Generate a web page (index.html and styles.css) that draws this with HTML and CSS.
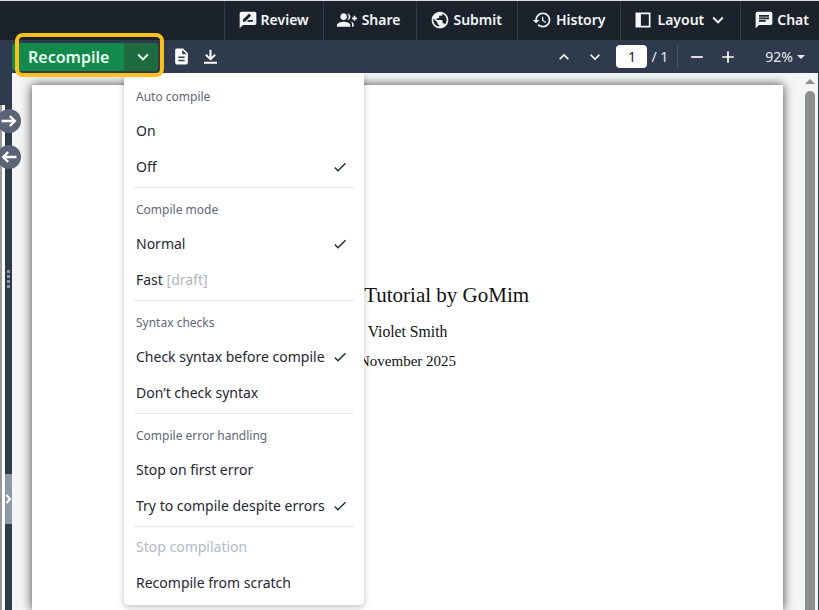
FILE: index.html
```html
<!DOCTYPE html>
<html lang="en">

<head>
    <meta charset="UTF-8">
    <meta name="viewport" content="width=device-width, initial-scale=1.0">
    <title>Recompile menu</title>
    <link rel="stylesheet" href="styles.css">
</head>

<body>
    <svg class="sprite" width="0" height="0">
        <symbol id="i-chevron" viewBox="0 0 24 24"><path d="M16.59 8.59L12 13.17 7.41 8.59 6 10l6 6 6-6z"/></symbol>
        <symbol id="i-check" viewBox="0 0 24 24"><path d="M9 16.17L4.83 12l-1.42 1.41L9 19 21 7l-1.41-1.41z"/></symbol>
    </svg>

    <header class="topbar">
        <a class="top-item top-review"><svg class="icon" viewBox="0 0 24 24"><path d="M20 2H4c-1.1 0-1.99.9-1.99 2L2 22l4-4h14c1.1 0 2-.9 2-2V4c0-1.1-.9-2-2-2zM6 14v-2.47l6.88-6.88c.2-.2.51-.2.71 0l1.77 1.77c.2.2.2.51 0 .71L8.47 14H6zm12 0h-7.5l2-2H18v2z"/></svg>Review</a>
        <a class="top-item top-share"><svg class="icon wide" viewBox="0 0 24 24"><path d="M22 9V7h-2v2h-2v2h2v2h2v-2h2V9zM8 12c2.21 0 4-1.79 4-4s-1.79-4-4-4-4 1.79-4 4 1.79 4 4 4zm0 2c-2.67 0-8 1.34-8 4v2h16v-2c0-2.66-5.33-4-8-4zM12.51 4.05C13.43 5.11 14 6.49 14 8s-.57 2.89-1.49 3.95C14.47 11.7 16 10.04 16 8s-1.53-3.7-3.49-3.95zM16.53 13.83C17.42 14.66 18 15.7 18 17v3h2v-3c0-1.45-1.59-2.51-3.47-3.17z"/></svg>Share</a>
        <a class="top-item"><svg class="icon" viewBox="0 0 24 24"><path d="M12 2C6.48 2 2 6.48 2 12s4.48 10 10 10 10-4.48 10-10S17.52 2 12 2zm-1 17.93c-3.95-.49-7-3.85-7-7.93 0-.62.08-1.21.21-1.79L9 15v1c0 1.1.9 2 2 2v1.93zm6.9-2.54c-.26-.81-1-1.39-1.9-1.39h-1v-3c0-.55-.45-1-1-1H8v-2h2c.55 0 1-.45 1-1V7h2c1.1 0 2-.9 2-2v-.41c2.93 1.19 5 4.06 5 7.41 0 2.08-.8 3.97-2.1 5.39z"/></svg>Submit</a>
        <a class="top-item top-history"><svg class="icon" viewBox="0 0 24 24"><path d="M13 3c-4.97 0-9 4.03-9 9H1l3.89 3.89.07.14L9 12H6c0-3.87 3.13-7 7-7s7 3.13 7 7-3.13 7-7 7c-1.93 0-3.68-.79-4.94-2.06l-1.42 1.42C8.27 19.99 10.51 21 13 21c4.97 0 9-4.03 9-9s-4.03-9-9-9zm-1 5v5l4.28 2.54.72-1.21-3.5-2.08V8H12z"/></svg>History</a>
        <a class="top-item top-layout"><svg class="icon" viewBox="0 0 24 24"><path d="M3 3h18v18H3V3zm6.5 2v14H19V5H9.5z"/></svg>Layout<svg class="caret"><use href="#i-chevron"/></svg></a>
        <a class="top-item"><svg class="icon" viewBox="0 0 24 24"><path d="M20 2H4c-1.1 0-1.99.9-1.99 2L2 22l4-4h14c1.1 0 2-.9 2-2V4c0-1.1-.9-2-2-2zM6 9h12v2H6V9zm8 5H6v-2h8v2zm4-6H6V6h12v2z"/></svg>Chat</a>
    </header>

    <section class="toolbar">
        <div class="compile-group">
            <button class="compile-btn">Recompile</button>
            <button class="compile-toggle"><svg class="caret"><use href="#i-chevron"/></svg></button>
        </div>
        <svg class="tool-icon" viewBox="0 0 24 24"><path d="M14 2H6c-1.1 0-1.99.9-1.99 2L4 20c0 1.1.89 2 1.99 2H18c1.1 0 2-.9 2-2V8l-6-6zm2 16H8v-2h8v2zm0-4H8v-2h8v2zm-3-5V3.5L18.5 9H13z"/></svg>
        <svg class="tool-icon" viewBox="0 0 24 24"><path d="M3.8 18.5h16.4V21H3.8zM10.7 3.5h2.6v9l3.7-3.7 1.8 1.8L12 17l-6.800-6.400 1.800-1.800 3.700 3.700z"/></svg>
        <div class="pager">
            <svg class="pager-btn up"><use href="#i-chevron"/></svg>
            <svg class="pager-btn"><use href="#i-chevron"/></svg>
            <span class="page-input">1</span>
            <span class="page-total">/ 1</span>
        </div>
        <div class="zoom-tools">
            <svg class="zoom-btn" viewBox="0 0 24 24"><path d="M19 13H5v-2h14v2z"/></svg>
            <svg class="zoom-btn" viewBox="0 0 24 24"><path d="M19 13h-6v6h-2v-6H5v-2h6V5h2v6h6v2z"/></svg>
            <span class="zoom-level">92%<i class="zoom-caret"></i></span>
        </div>
    </section>

    <main class="workspace">
        <aside class="edge"><div class="edge-top"></div></aside>
        <div class="splitter">
            <button class="sync-btn sync-right"><svg viewBox="0 0 24 24"><path d="M3 10.500h12.500L12 7l2-2 7 7-7 7-2-2 3.500-3.500H3z"/></svg></button>
            <button class="sync-btn sync-left"><svg viewBox="0 0 24 24"><path d="M21 10.500H8.500L12 7l-2-2-7 7 7 7 2-2-3.500-3.500H21z"/></svg></button>
            <div class="grip"><span></span><span></span><span></span><span></span></div>
            <div class="collapse"><svg viewBox="0 0 7 10"><path d="M1.500 1l3.500 4-3.500 4"/></svg></div>
        </div>
        <div class="viewer">
            <article class="page">
                <h1>Overleaf Tutorial by GoMim</h1>
                <p class="author">Violet Smith</p>
                <p class="date">November 2025</p>
            </article>
        </div>
        <div class="scrollbar">
            <i class="scroll-arrow"></i>
            <div class="scroll-thumb"></div>
        </div>
    </main>

    <ul class="menu">
        <li class="menu-head">Auto compile</li>
        <li class="menu-item">On</li>
        <li class="menu-item">Off<svg class="tick"><use href="#i-check"/></svg></li>
        <li class="menu-sep"></li>
        <li class="menu-head">Compile mode</li>
        <li class="menu-item">Normal<svg class="tick"><use href="#i-check"/></svg></li>
        <li class="menu-item">Fast&nbsp;<span class="muted">[draft]</span></li>
        <li class="menu-sep"></li>
        <li class="menu-head">Syntax checks</li>
        <li class="menu-item">Check syntax before compile<svg class="tick"><use href="#i-check"/></svg></li>
        <li class="menu-item">Don’t check syntax</li>
        <li class="menu-sep"></li>
        <li class="menu-head">Compile error handling</li>
        <li class="menu-item">Stop on first error</li>
        <li class="menu-item">Try to compile despite errors<svg class="tick"><use href="#i-check"/></svg></li>
        <li class="menu-sep short"></li>
        <li class="menu-item disabled">Stop compilation</li>
        <li class="menu-item">Recompile from scratch</li>
    </ul>
</body>

</html>
```

FILE: styles.css
```css
*,
*::before,
*::after {
  box-sizing: border-box;
}

html,
body {
  height: 100%;
}

body {
  margin: 0;
  overflow: hidden;
  display: flex;
  flex-direction: column;
  font-family: "Noto Sans", sans-serif;
  background-color: #f4f5f7;
}

.sprite {
  position: absolute;
}

/* top navigation */
.topbar {
  display: flex;
  justify-content: flex-end;
  flex: 0 0 40px;
  background-color: #1b222c;
  border-top: 1px solid #d8dade;
}

.top-item {
  display: flex;
  align-items: center;
  padding: 0 15px 3px 13px;
  border-left: 1px solid #2f3a4c;
  color: #f4f5f6;
  font-size: 14px;
  font-weight: 600;
}

.top-item:last-child {
  padding-right: 10px;
}

.top-review {
  padding-right: 14px;
}

.top-share {
  padding-right: 16px;
}

.top-history {
  padding-left: 14px;
}

.top-layout {
  padding-left: 12px;
}

.icon {
  width: 20px;
  height: 20px;
  margin: 2px 3px 0 0;
  fill: currentColor;
}

.icon.wide {
  margin-right: 5px;
}

.top-history .icon,
.top-layout .icon {
  margin-right: 4px;
}

.caret {
  width: 22px;
  height: 22px;
  margin: 2px -4px 0 3px;
  fill: currentColor;
}

/* pdf toolbar */
.toolbar {
  position: relative;
  z-index: 2;
  display: flex;
  align-items: center;
  flex: 0 0 33px;
  padding-left: 12px;
  background-color: #2f3a4c;
  color: #fff;
}

.compile-group {
  position: relative;
  display: flex;
  height: 28px;
  margin-top: 1px;
  border-radius: 4px;
  background-color: #138a4b;
}

/* highlight ring round the button, sits over the menu */
.compile-group::after {
  content: "";
  position: absolute;
  top: -10px;
  left: 3px;
  right: -6px;
  bottom: -6px;
  border: 4px solid #fdc21a;
  border-radius: 8px;
}

.compile-btn,
.compile-toggle {
  border: 0;
  color: #e6fff0;
  font-family: inherit;
  background: none;
}

.compile-btn {
  width: 112px;
  padding: 0 0 0 16px;
  text-align: left;
  font-size: 16px;
  font-weight: 600;
}

.compile-toggle {
  display: flex;
  align-items: center;
  justify-content: center;
  width: 34px;
  padding: 0 0 0 4px;
  background-color: #1e6b3f;
  border-radius: 0 4px 4px 0;
}

.compile-toggle .caret {
  margin: 0;
}

.tool-icon {
  width: 19px;
  height: 19px;
  margin-left: 14px;
  fill: #fff;
}

.tool-icon + .tool-icon {
  margin-left: 10px;
}

.pager {
  display: flex;
  align-items: center;
  margin-left: auto;
  gap: 11px;
}

.pager-btn {
  width: 20px;
  height: 20px;
  fill: #fff;
}

.up {
  transform: rotate(180deg);
}

.page-input {
  width: 31px;
  height: 23px;
  border-radius: 4px;
  background-color: #fff;
  color: #1b222c;
  font-size: 14px;
  line-height: 23px;
  text-align: center;
}

.page-total {
  margin-left: -7px;
  padding-right: 9px;
  border-right: 1px solid #495365;
  color: #e7e9ee;
  font-size: 14px;
  line-height: 23px;
}

.zoom-tools {
  display: flex;
  align-items: center;
  gap: 11px;
  margin-left: 9px;
  padding-right: 14px;
}

.zoom-btn {
  width: 20px;
  height: 20px;
  fill: #fff;
}

.zoom-level {
  display: flex;
  align-items: center;
  margin-left: 16px;
  color: #e7e9ee;
  font-size: 14px;
}

.zoom-caret {
  width: 0;
  height: 0;
  margin-left: 4px;
  border: 4px solid transparent;
  border-top-color: #e7e9ee;
  border-bottom: 0;
}

/* left split + pdf */
.workspace {
  flex: 1;
  display: flex;
  min-height: 0;
}

.edge {
  flex: 0 0 5px;
  border-left: 2px solid #999;
  background-color: #fff;
}

.edge-top {
  height: 32px;
  margin-left: -2px;
  background-color: #2f3a4c;
}

.splitter {
  position: relative;
  flex: 0 0 7px;
  background-color: #2f3a4c;
}

.sync-btn {
  position: absolute;
  left: -8px;
  display: flex;
  align-items: center;
  justify-content: center;
  width: 24px;
  height: 24px;
  padding: 0;
  border: 0;
  border-radius: 50%;
  background-color: #5b6476;
}

.sync-btn svg {
  width: 20px;
  height: 20px;
  fill: #fff;
}

.sync-right {
  top: 36px;
}

.sync-left {
  top: 72px;
}

.grip {
  position: absolute;
  top: 197px;
  left: 2px;
  display: flex;
  flex-direction: column;
  gap: 2px;
}

.grip span {
  width: 3px;
  height: 3px;
  background-color: #8d95a5;
}

.collapse {
  position: absolute;
  top: 401px;
  left: 0;
  display: flex;
  align-items: center;
  width: 7px;
  height: 50px;
  background-color: #9097a5;
}

.collapse svg {
  width: 7px;
  height: 10px;
  fill: none;
  stroke: #fff;
  stroke-width: 2;
}

.viewer {
  flex: 1;
  min-width: 0;
  padding: 12px 21px 0 20px;
}

.page {
  height: 100%;
  padding-top: 198px;
  background-color: #fff;
  box-shadow: 0 0 10px rgba(0, 0, 0, 0.75);
  color: #111;
  font-family: "Liberation Serif", serif;
  text-align: center;
}

.page h1 {
  margin: 0;
  font-size: 21px;
  font-weight: 400;
  line-height: 24px;
}

.author {
  margin: 16px 0 0;
  font-size: 15.700px;
  line-height: 18px;
}

.date {
  margin: 11px 0 0;
  font-size: 15px;
  line-height: 18px;
}

.scrollbar {
  flex: 0 0 14px;
  padding: 6px 3px 0 1px;
  border-right: 1px solid #2f3a4c;
}

.scroll-arrow {
  display: block;
  width: 0;
  height: 0;
  margin: 0 auto 7px;
  border: 5px solid transparent;
  border-bottom-color: #8e8e8e;
  border-top: 0;
}

.scroll-thumb {
  height: 100%;
  border-radius: 5px 5px 0 0;
  background-color: #8e8e8e;
}

/* recompile dropdown */
.menu {
  position: absolute;
  top: 73px;
  left: 124px;
  width: 240px;
  margin: 0;
  padding: 8px 0 4px;
  list-style: none;
  border-radius: 0 0 4px 4px;
  background-color: #fff;
  box-shadow: 0 2px 6px rgba(0, 0, 0, 0.25);
  color: #1f2733;
  font-size: 14px;
}

.menu-head {
  display: flex;
  align-items: center;
  height: 32px;
  padding: 0 12px 2px;
  color: #5f6776;
  font-size: 12px;
}

.menu-item {
  display: flex;
  align-items: center;
  justify-content: space-between;
  height: 36px;
  padding: 0 16px 2px 12px;
}

.menu-item .muted {
  margin-right: auto;
  color: #aeb4bf;
}

.menu-item.disabled {
  color: #b4bac4;
}

.menu-sep {
  height: 1px;
  margin: 2px 10px 6px;
  background-color: #e7e9ee;
}

.menu-sep.short {
  margin-bottom: 2px;
}

.tick {
  width: 16px;
  height: 16px;
  margin-top: 2px;
  fill: #1f2733;
}
```
